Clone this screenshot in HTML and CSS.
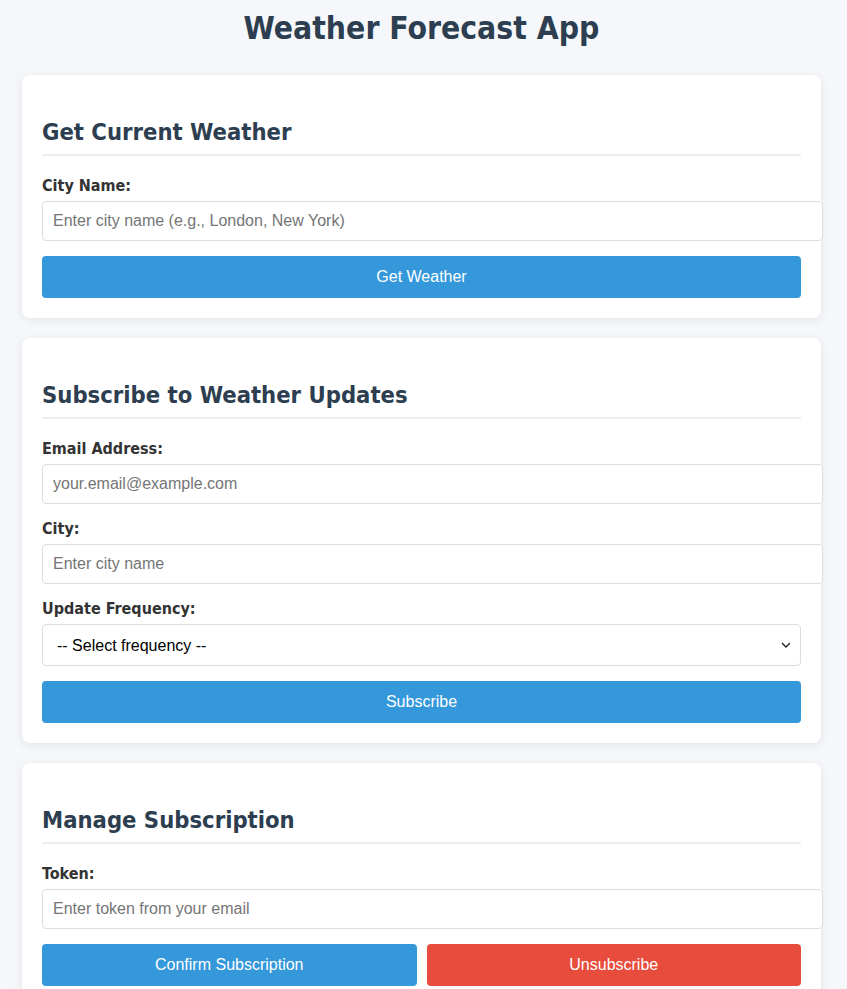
FILE: index.html
```html
<!DOCTYPE html>
<html lang="en">
<head>
<meta charset="utf-8">
<title>Weather Forecast App</title>
<link rel="stylesheet" href="styles.css">
</head>
<body>
<div class="container">
  <h1 class="title">Weather Forecast App</h1>

  <section class="card">
    <h2 class="card-title">Get Current Weather</h2>
    <div class="form-group">
      <label class="label" for="city">City Name:</label>
      <input class="input" id="city" type="text" placeholder="Enter city name (e.g., London, New York)">
    </div>
    <button class="btn">Get Weather</button>
  </section>

  <section class="card">
    <h2 class="card-title">Subscribe to Weather Updates</h2>
    <div class="form-group">
      <label class="label" for="email">Email Address:</label>
      <input class="input" id="email" type="email" placeholder="your.email@example.com">
    </div>
    <div class="form-group">
      <label class="label" for="subcity">City:</label>
      <input class="input" id="subcity" type="text" placeholder="Enter city name">
    </div>
    <div class="form-group">
      <label class="label" for="freq">Update Frequency:</label>
      <div class="select-wrap">
        <select class="select" id="freq">
          <option>-- Select frequency --</option>
          <option>Hourly</option>
          <option>Daily</option>
        </select>
        <svg class="chevron" width="10" height="6" viewBox="0 0 10 6"><path d="M1 1l4 4 4-4" fill="none" stroke="#222" stroke-width="1.4"/></svg>
      </div>
    </div>
    <button class="btn">Subscribe</button>
  </section>

  <section class="card">
    <h2 class="card-title">Manage Subscription</h2>
    <div class="form-group">
      <label class="label" for="token">Token:</label>
      <input class="input" id="token" type="text" placeholder="Enter token from your email">
    </div>
    <div class="btn-row">
      <button class="btn">Confirm Subscription</button>
      <button class="btn btn-danger">Unsubscribe</button>
    </div>
  </section>
</div>
</body>
</html>
```

FILE: styles.css
```css
html, body {
  margin: 0;
  padding: 0;
}
body {
  background: #f5f7fa;
  font-family: "DejaVu Sans Condensed", "DejaVu Sans", sans-serif;
  color: #333;
}
.container {
  width: 799px;
  margin: 0 0 0 22px;
}
.title {
  margin: 9px 0 28px;
  font-size: 31.6px;
  line-height: 38px;
  font-weight: bold;
  text-align: center;
  color: #2c3e50;
}
.card {
  background: #fff;
  border-radius: 8px;
  box-shadow: 0 2px 10px rgba(0, 0, 0, 0.08);
  padding: 20px;
  margin-bottom: 20px;
}
.card-title {
  margin: 20px 0 20px;
  font-size: 23.6px;
  line-height: 35px;
  font-weight: bold;
  color: #2c3e50;
  padding-bottom: 4px;
  border-bottom: 2px solid #eee;
}
.form-group {
  margin-bottom: 15px;
}
.label {
  display: block;
  font-size: 16px;
  line-height: 20px;
  font-weight: bold;
  color: #333;
  margin-bottom: 5px;
}
.input {
  display: block;
  width: 100%;
  box-sizing: content-box;
  padding: 10px;
  margin: 0;
  border: 1px solid #ddd;
  border-radius: 4px;
  font-family: "Liberation Sans", Arial, sans-serif;
  font-size: 16px;
  line-height: 18px;
  height: 18px;
  color: #333;
  background: #fff;
  outline: none;
}
.input::placeholder {
  color: #757575;
}
.select-wrap {
  position: relative;
}
.select {
  display: block;
  width: 100%;
  box-sizing: border-box;
  height: 42px;
  margin: 0;
  padding: 0 10px 0 14px;
  border: 1px solid #ddd;
  border-radius: 4px;
  background: #fff;
  font-family: "Liberation Sans", Arial, sans-serif;
  font-size: 16px;
  color: #000;
  appearance: none;
  -webkit-appearance: none;
  outline: none;
}
.chevron {
  position: absolute;
  right: 10px;
  top: 18px;
  pointer-events: none;
}
.btn {
  display: block;
  width: 100%;
  box-sizing: border-box;
  padding: 12px;
  margin: 0;
  border: none;
  border-radius: 4px;
  background: #3498db;
  color: #fff;
  font-family: "Liberation Sans", Arial, sans-serif;
  font-size: 16px;
  line-height: 18px;
  cursor: pointer;
}
.btn-danger {
  background: #e74c3c;
}
.btn-row {
  display: flex;
  gap: 10px;
}
.btn-row .btn {
  flex: 1;
}
```
